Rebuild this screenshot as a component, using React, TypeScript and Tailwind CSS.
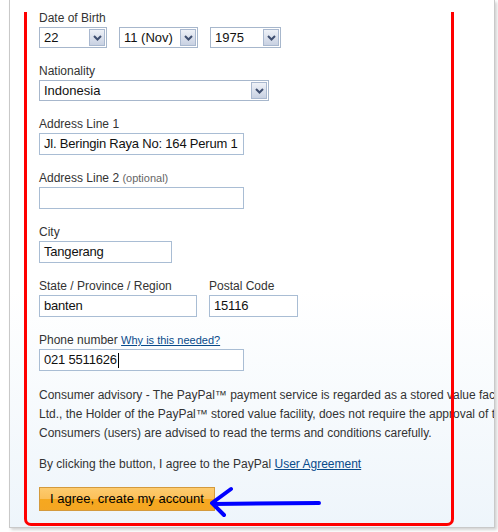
import React from "react";

const font = { fontFamily: '"Liberation Sans", Arial, sans-serif' };

function Chevron() {
  return (
    <div className="flex h-[17px] w-[16px] items-center justify-center border border-[#a9b8cf] bg-gradient-to-b from-[#eef1f7] to-[#c8d1e2]">
      <svg width="9" height="6" viewBox="0 0 9 6">
        <path d="M1 1 L4.5 4.5 L8 1" fill="none" stroke="#3f4f70" strokeWidth="2" />
      </svg>
    </div>
  );
}

function Select({ value, width }: { value: string; width: string }) {
  return (
    <div
      className={`flex h-[21px] items-center justify-between border border-[#a7b7cc] bg-white pl-[4px] pr-[1px] text-[13px] text-[#111] ${width}`}
    >
      <span>{value}</span>
      <Chevron />
    </div>
  );
}

function Input({ value, width, caret }: { value: string; width: string; caret?: boolean }) {
  return (
    <div
      className={`mt-[1px] flex h-[22px] items-center overflow-hidden whitespace-nowrap border border-[#a9bdd4] bg-white pl-[4px] text-[13px] tracking-[-0.2px] text-[#111] ${width}`}
    >
      <span>{value}</span>
      {caret && <span className="ml-[1px] inline-block h-[15px] w-px bg-black" />}
    </div>
  );
}

function Label({ children }: { children: React.ReactNode }) {
  return <div className="whitespace-nowrap text-[12px] leading-[15px] text-[#333]">{children}</div>;
}

export default function App() {
  return (
    <div className="relative h-[532px] w-[498px] overflow-hidden bg-white" style={font}>
      <div className="ml-[9px] h-[528px] w-[486px] overflow-hidden border-b border-l border-r border-[#c9c9c9] bg-gradient-to-b from-white from-55% to-[#eef5fb] pl-[29px] pt-[11px] shadow-[2px_2px_3px_rgba(0,0,0,0.18)]">
        <div className="flex flex-col gap-[16px]">
          <div>
            <Label>Date of Birth</Label>
            <div className="mt-[1px] flex gap-[12px]">
              <Select value="22" width="w-[68px]" />
              <Select value="11 (Nov)" width="w-[79px]" />
              <Select value="1975" width="w-[71px]" />
            </div>
          </div>
          <div>
            <Label>Nationality</Label>
            <div className="mt-[1px]">
              <Select value="Indonesia" width="w-[230px]" />
            </div>
          </div>
          <div>
            <Label>Address Line 1</Label>
            <Input value="Jl. Beringin Raya No: 164 Perum 1" width="w-[205px]" />
          </div>
          <div>
            <Label>
              Address Line 2 <span className="text-[11px] text-[#666]">(optional)</span>
            </Label>
            <Input value="" width="w-[205px]" />
          </div>
          <div>
            <Label>City</Label>
            <Input value="Tangerang" width="w-[133px]" />
          </div>
          <div className="flex gap-[12px]">
            <div>
              <Label>State / Province / Region</Label>
              <Input value="banten" width="w-[158px]" />
            </div>
            <div>
              <Label>Postal Code</Label>
              <Input value="15116" width="w-[89px]" />
            </div>
          </div>
          <div>
            <Label>
              Phone number{" "}
              <a className="text-[11px] text-[#084a8a] underline">Why is this needed?</a>
            </Label>
            <Input value="021 5511626" width="w-[205px]" caret />
          </div>
        </div>

        <div className="mt-[15px] whitespace-nowrap text-[12px] leading-[19px] text-[#333]">
          <div>
            Consumer advisory - The PayPal™ payment service is regarded as a stored value facility under Singapore law. PayPal Pte.
          </div>
          <div>
            Ltd., the Holder of the PayPal™ stored value facility, does not require the approval of the Monetary Authority of Singapore.
          </div>
          <div>Consumers (users) are advised to read the terms and conditions carefully.</div>
        </div>

        <div className="mt-[12px] text-[12px] leading-[19px] text-[#333]">
          By clicking the button, I agree to the PayPal{" "}
          <a className="text-[#084a8a] underline">User Agreement</a>
        </div>

        <button className="mt-[13px] h-[24px] w-[176px] border border-[#d49a3c] bg-[linear-gradient(to_bottom,#fdcb6e_0%,#fbc05a_48%,#f6a81f_52%,#f4a623_100%)] text-[13px] text-black">
          I agree, create my account
        </button>
      </div>

      {/* red annotation frame */}
      <div className="pointer-events-none absolute left-[24px] top-[12px] h-[514px] w-[430px] rounded-b-[7px] border-[3px] border-t-0 border-[#ff0000]" />

      {/* blue annotation arrow */}
      <svg className="pointer-events-none absolute left-0 top-0" width="498" height="532">
        <path
          d="M213 504 L319 503 M231 489 L212 503 L224 515"
          fill="none"
          stroke="#0000ff"
          strokeWidth="4"
          strokeLinecap="round"
          strokeLinejoin="round"
        />
      </svg>
    </div>
  );
}
